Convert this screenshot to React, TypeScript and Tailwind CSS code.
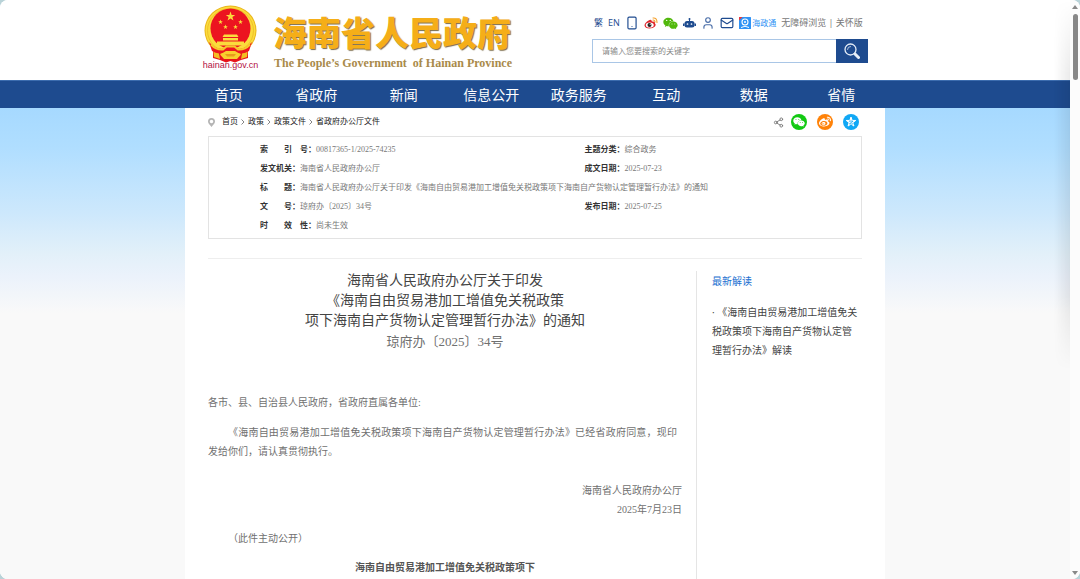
import React from "react";
import { Mail, Share2, Smartphone, User } from "lucide-react";
import { FaWeibo, FaWeixin } from "react-icons/fa";

interface MetaCell {
  label: string;
  value: string;
}

const navItems = ["首页", "省政府", "新闻", "信息公开", "政务服务", "互动", "数据", "省情"];

const crumbs = ["首页", "政策", "政策文件", "省政府办公厅文件"];

const metaRows: MetaCell[][] = [
  [
    { label: "索　　引　号：", value: "00817365-1/2025-74235" },
    { label: "主题分类：", value: "综合政务" },
  ],
  [
    { label: "发文机关：", value: "海南省人民政府办公厅" },
    { label: "成文日期：", value: "2025-07-23" },
  ],
  [
    {
      label: "标　　题：",
      value:
        "海南省人民政府办公厅关于印发《海南自由贸易港加工增值免关税政策项下海南自产货物认定管理暂行办法》的通知",
    },
  ],
  [
    { label: "文　　号：", value: "琼府办〔2025〕34号" },
    { label: "发布日期：", value: "2025-07-25" },
  ],
  [{ label: "时　　效　性：", value: "尚未生效" }],
];

const STAR = "M0-10 2.4-3.1 9.5-3.1 3.8 1.2 5.9 8.1 0 4-5.9 8.1-3.8 1.2-9.5-3.1-2.4-3.1Z";

const Emblem: React.FC = () => (
  <svg viewBox="0 0 106 116" className="h-[58px] w-[53px]" aria-hidden="true">
    <path d="M18 82 18 106 32 110 44 115 53 112 62 115 74 110 88 106 88 82Z" fill="#e8141c" />
    <path d="M18 84 28 88 32 108 20 104Z M88 84 78 88 74 108 86 104Z" fill="#f3bd22" />
    <ellipse cx="53" cy="51" rx="52" ry="50" fill="#e9b51c" />
    <ellipse cx="53" cy="51" rx="50" ry="48" fill="#fbdc3c" />
    <ellipse cx="53" cy="51" rx="46" ry="44" fill="none" stroke="#ecb824" strokeWidth="1.5" />
    <circle cx="53" cy="47" r="40" fill="#ec1420" />
    <g fill="#fbdc3c">
      <path d={STAR} transform="translate(53 23)" />
      <path d={STAR} transform="translate(33 34) scale(.5)" />
      <path d={STAR} transform="translate(73 34) scale(.5)" />
      <path d={STAR} transform="translate(43 44) scale(.5)" />
      <path d={STAR} transform="translate(63 44) scale(.5)" />
      <path d="M40 59h26l3 5H37Z M38 66h30v5H38Z M26 73h54v8H26Z" />
    </g>
    <path d="M10 74Q22 88 36 88L44 83H62L70 88Q84 88 96 74L90 92Q80 99 68 96H38Q26 99 16 92Z" fill="#ec1420" />
    <path d="M14 79Q24 90 38 89L45 83H61L68 89Q82 90 92 79" fill="none" stroke="#f6c82a" strokeWidth="4" />
    <path d="M32 99 44 92H62L74 99 66 108H40Z" fill="#f8cf2e" />
    <path d="M42 98h22l-4 5H46Z" fill="#e89a1c" />
  </svg>
);

const WeiboColor: React.FC = () => (
  <svg viewBox="0 0 28 24" className="h-3 w-3.5" aria-hidden="true">
    <path d="M11 6Q15 4 16 9Q23 8 22 13Q25 15 22 19Q18 23 11 23Q2 23 1 17Q1 11 11 6Z" fill="#e0262c" />
    <ellipse cx="11.500" cy="16" rx="8" ry="5.200" fill="#fff" />
    <circle cx="11" cy="16" r="4" fill="#222" />
    <circle cx="12.500" cy="14.500" r="1.200" fill="#fff" />
    <path d="M18 2Q26 1 26 11M18 6Q22 6 22 10" fill="none" stroke="#f5a02a" strokeWidth="2.200" strokeLinecap="round" />
  </svg>
);

const Robot: React.FC = () => (
  <svg viewBox="0 0 26 20" className="h-2.5 w-[13px]" aria-hidden="true">
    <path d="M12 1h2v5h-2Z M0 11h3v5H0Z M23 11h3v5h-3Z" fill="#1e4b8f" />
    <rect x="3" y="6" width="20" height="13" rx="5" fill="#1e4b8f" />
    <circle cx="13" cy="2" r="2" fill="#1e4b8f" />
    <circle cx="9" cy="12" r="1.700" fill="#fff" />
    <circle cx="17" cy="12" r="1.700" fill="#fff" />
  </svg>
);

const ServiceBadge: React.FC = () => (
  <svg viewBox="0 0 24 24" className="h-3 w-3" aria-hidden="true">
    <rect width="24" height="24" rx="1" fill="#2f93f5" />
    <path d="M0 0h7L0 7Z" fill="#e8383d" />
    <circle cx="12" cy="10" r="6" fill="none" stroke="#fff" strokeWidth="2.200" />
    <circle cx="12" cy="10" r="2" fill="#fff" />
    <path d="M4 21q8-5 16 0" fill="none" stroke="#fff" strokeWidth="2" />
  </svg>
);

const Magnifier: React.FC = () => (
  <svg viewBox="0 0 32 32" className="h-4 w-4" fill="none" stroke="#e6eef8" aria-hidden="true">
    <circle cx="13" cy="13" r="11" strokeWidth="2.600" />
    <path d="M7 13a6 6 0 0 1 6-6" strokeWidth="1.500" strokeLinecap="round" />
    <path d="m22 22 7 7" strokeWidth="6" strokeLinecap="round" />
  </svg>
);

const Pin: React.FC = () => (
  <svg viewBox="0 0 14 18" className="mr-[7px] h-[9px] w-[7px]" aria-hidden="true">
    <path
      d="M7 0a7 7 0 0 1 7 7c0 4-4 7-7 11-3-4-7-7-7-11a7 7 0 0 1 7-7Zm0 3.500a3.500 3.500 0 1 0 0 7 3.500 3.500 0 0 0 0-7Z"
      fill="#b5b5b5"
      fillRule="evenodd"
    />
  </svg>
);

const Qzone: React.FC = () => (
  <svg viewBox="-12 -12 24 24" className="h-3 w-3" aria-hidden="true">
    <path d={STAR} fill="#fff" stroke="#fff" strokeWidth="2" strokeLinejoin="round" />
    <path d="M-4-1.500Q0-2.500 4-1.500L-3 3.500Q1 4.500 5 3.500" fill="none" stroke="#11a8f5" strokeWidth="1.600" />
  </svg>
);

const Header: React.FC = () => (
  <header className="h-20 bg-white">
    <div className="mx-auto flex w-full max-w-[700px] justify-between pr-[17px] pl-[18px]">
      <a href="#" className="flex">
        <span className="flex w-[55px] flex-col items-center pt-[5px]">
          <Emblem />
          <span className="-mt-[3px] font-['Liberation_Sans',sans-serif] text-[9px] leading-[10px] whitespace-nowrap text-[#b3123f]">
            hainan.gov.cn
          </span>
        </span>
        <span className="flex flex-col pt-[13px] pl-[15px]">
          <span className="text-[34px] leading-[40px] font-black whitespace-nowrap text-[#f5ae18] [text-shadow:1px_1px_1px_#7a6a48]">
            海南省人民政府
          </span>
          <span className="pt-[3px] pl-px font-['Liberation_Serif',serif] text-[12px] leading-[14px] font-bold whitespace-pre text-[#a98a4a]">
            The People’s Government  of Hainan Province
          </span>
        </span>
      </a>
      <div className="flex w-[276px] flex-col pt-4">
        <div className="flex h-[14px] items-center justify-between pr-[5px] pl-0.5 text-[9px] whitespace-nowrap text-[#1e4b8f]">
          <a href="#">繁</a>
          <a href="#">EN</a>
          <a href="#" aria-label="移动版">
            <Smartphone className="h-[14px] w-[14px]" strokeWidth={2} />
          </a>
          <a href="#" aria-label="微博">
            <WeiboColor />
          </a>
          <a href="#" aria-label="微信">
            <FaWeixin className="h-[15px] w-[15px] text-[#51b80c]" />
          </a>
          <a href="#" aria-label="智能机器人">
            <Robot />
          </a>
          <a href="#" aria-label="个人中心">
            <User className="h-[14px] w-[14px] text-[#4a6ea8]" strokeWidth={2} />
          </a>
          <a href="#" aria-label="邮箱">
            <Mail className="h-[14px] w-[14px]" strokeWidth={2} />
          </a>
          <a href="#" className="flex items-center gap-px text-[8px] text-[#2f93f5]">
            <ServiceBadge />
            海政通
          </a>
          <span className="text-[#777]">
            <a href="#">无障碍浏览</a> | <a href="#">关怀版</a>
          </span>
        </div>
        <form className="mt-[9px] flex h-6">
          <input
            type="text"
            aria-label="搜索"
            placeholder="请输入您要搜索的关键字"
            className="min-w-0 flex-1 border border-r-0 border-[#a9c6e6] px-[9px] text-[8px] outline-none placeholder:text-[#888]"
          />
          <button type="button" aria-label="搜索" className="flex w-8 items-center justify-center bg-[#1e4b8f]">
            <Magnifier />
          </button>
        </form>
      </div>
    </div>
  </header>
);

const Breadcrumb: React.FC = () => (
  <div className="flex h-7 items-center justify-between pr-[3px]">
    <nav className="flex items-center font-['Liberation_Serif','Noto_Sans_CJK_SC',serif] text-[8px] text-[#222]">
      <Pin />
      {crumbs.map((crumb, index) => (
        <span key={crumb} className="flex items-center">
          {index > 0 && (
            <svg viewBox="0 0 8 12" className="mx-[3px] h-1.5 w-1" fill="none" stroke="#777" aria-hidden="true">
              <path d="m1 1 5 5-5 5" strokeWidth="1.800" />
            </svg>
          )}
          <a href="#">{crumb}</a>
        </span>
      ))}
    </nav>
    <div className="flex items-center gap-[10px] text-white">
      <Share2 className="-mr-[3px] h-[11px] w-[11px] text-[#777]" strokeWidth={2} />
      <a href="#" aria-label="微信" className="flex h-4 w-4 items-center justify-center rounded-full bg-[#12c912]">
        <FaWeixin className="h-3 w-3" />
      </a>
      <a href="#" aria-label="微博" className="flex h-4 w-4 items-center justify-center rounded-full bg-[#ff8208]">
        <FaWeibo className="h-3 w-3" />
      </a>
      <a href="#" aria-label="QQ空间" className="flex h-4 w-4 items-center justify-center rounded-full bg-[#11a8f5]">
        <Qzone />
      </a>
    </div>
  </div>
);

const MetaTable: React.FC = () => (
  <div className="border border-[#e3e3e3] py-[3px] pl-[51px]">
    <table className="w-full table-fixed font-['Liberation_Serif','Noto_Sans_CJK_SC',serif] text-[8px] leading-[19px] whitespace-nowrap text-[#777]">
      <tbody>
        {metaRows.map((row) => (
          <tr key={row[0].label}>
            {row.map((cell, index) => (
              <td
                key={cell.label}
                colSpan={row.length === 1 ? 2 : 1}
                className={index === 0 ? "w-[54%] p-0" : "p-0"}
              >
                <b className="text-[#333]">{cell.label}</b>
                {cell.value}
              </td>
            ))}
          </tr>
        ))}
      </tbody>
    </table>
  </div>
);

const Article: React.FC = () => (
  <article className="flex-1 border-r border-[#e5e5e5] pr-[14px] font-['Liberation_Serif','Noto_Sans_CJK_SC',serif] text-[10px] leading-[19px] text-[#707070]">
    <h1 className="text-center text-sm leading-5 text-[#444]">
      海南省人民政府办公厅关于印发
      <br />
      《海南自由贸易港加工增值免关税政策
      <br />
      项下海南自产货物认定管理暂行办法》的通知
    </h1>
    <p className="text-center text-[13px] leading-[22px]">琼府办〔2025〕34号</p>
    <p className="mt-10">各市、县、自治县人民政府，省政府直属各单位:</p>
    <p className="mt-[11px] mr-[5px] indent-[20px] text-justify">
      《海南自由贸易港加工增值免关税政策项下海南自产货物认定管理暂行办法》已经省政府同意，现印发给你们，请认真贯彻执行。
    </p>
    <p className="mt-5 text-right">
      海南省人民政府办公厅
      <br />
      2025年7月23日
    </p>
    <p className="mt-[10px] indent-[20px]">（此件主动公开）</p>
    <h2 className="mt-[10px] text-center font-bold text-[#555]">海南自由贸易港加工增值免关税政策项下</h2>
  </article>
);

const Sidebar: React.FC = () => (
  <aside className="w-[165px] pr-[2px] pl-[15px] text-[10px]">
    <h2 className="leading-5 text-[#1a6fd0]">最新解读</h2>
    <a href="#" className="mt-3 block leading-[19px] text-[#444]">
      · 《海南自由贸易港加工增值免关税政策项下海南自产货物认定管理暂行办法》解读
    </a>
  </aside>
);

const Scrollbar: React.FC = () => (
  <div className="flex w-[10px] flex-col items-center bg-[#fcfcfc] pt-[5px] pb-1">
    <svg viewBox="0 0 12 8" className="h-1 w-1.5" aria-hidden="true">
      <path d="M6 0 12 8H0Z" fill="#888" />
    </svg>
    <div className="mt-[5px] h-[66px] w-[5px] rounded-full bg-[#888]" />
    <svg viewBox="0 0 12 8" className="mt-auto h-1 w-1.5" aria-hidden="true">
      <path d="M0 0h12L6 8Z" fill="#888" />
    </svg>
  </div>
);

const App: React.FC = () => {
  return (
    <div className="h-screen bg-[#b9d3d8]">
      <div className="flex h-full overflow-hidden rounded-lg bg-white font-['Open_Sans','Noto_Sans_CJK_SC',sans-serif]">
        <div className="relative flex min-w-0 flex-1 flex-col">
          <Header />
          <nav className="border-t border-[#3c6cae] bg-[#1e4b8f]">
            <div className="mx-auto grid w-full max-w-[700px] grid-cols-8 text-center text-sm leading-[27px] whitespace-nowrap text-white">
              {navItems.map((item) => (
                <a key={item} href="#">
                  {item}
                </a>
              ))}
            </div>
          </nav>
          <div className="flex-1 bg-[#f9f9f9] bg-[linear-gradient(#a6d9ff_0px,#b0deff_40px,#cde8fc_105px,#e2f0f9_145px,#ebf2fb_168px,#f9f9f9_205px)]">
            <main className="mx-auto flex h-full w-full max-w-[700px] flex-col bg-white px-[23px]">
              <Breadcrumb />
              <MetaTable />
              <div className="mt-[19px] flex flex-1 border-t border-[#eee] pt-3">
                <Article />
                <Sidebar />
              </div>
            </main>
          </div>
          {/* soft edge of the collapsed side panel */}
          <div className="pointer-events-none absolute top-0 right-0 h-[370px] w-4 bg-linear-to-l from-black/8 to-transparent [mask-image:linear-gradient(transparent,black_20%,black_80%,transparent)]" />
        </div>
        <Scrollbar />
      </div>
    </div>
  );
};

export default App;
